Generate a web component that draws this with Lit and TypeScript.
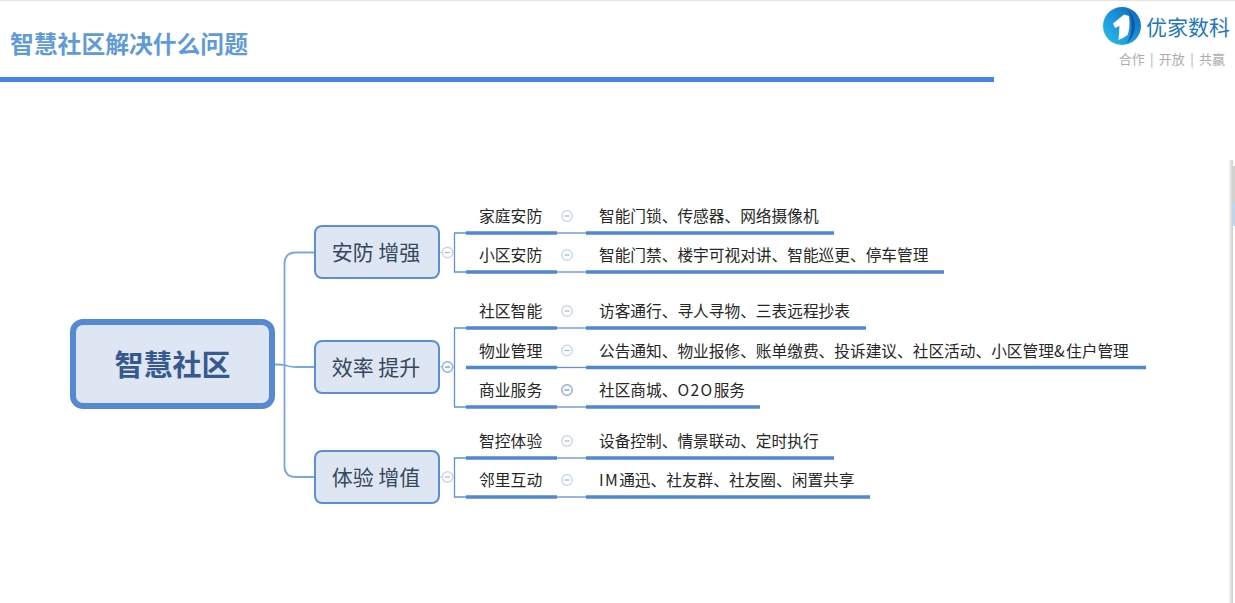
import { LitElement, html, css, svg } from "lit";
import { customElement } from "lit/decorators.js";

interface Leaf { label: string; detail: string; y: number; end: number; strong?: boolean }
interface Branch { label: string; y: number; top: number; leaves: Leaf[] }

const BRANCHES: Branch[] = [
  { label: "安防 增强", y: 252.5, top: 225, leaves: [
    { label: "家庭安防", detail: "智能门锁、传感器、网络摄像机", y: 233, end: 834 },
    { label: "小区安防", detail: "智能门禁、楼宇可视对讲、智能巡更、停车管理", y: 272, end: 944 },
  ]},
  { label: "效率 提升", y: 367, top: 340, leaves: [
    { label: "社区智能", detail: "访客通行、寻人寻物、三表远程抄表", y: 328, end: 866 },
    { label: "物业管理", detail: "公告通知、物业报修、账单缴费、投诉建议、社区活动、小区管理&住户管理", y: 367.5, end: 1146 },
    { label: "商业服务", detail: "社区商城、O2O服务", y: 407, end: 760, strong: true },
  ]},
  { label: "体验 增值", y: 477, top: 450, leaves: [
    { label: "智控体验", detail: "设备控制、情景联动、定时执行", y: 458, end: 834 },
    { label: "邻里互动", detail: "IM通迅、社友群、社友圈、闲置共享", y: 497, end: 870 },
  ]},
];

function toggle(cx: number, cy: number, strong = false) {
  const c = strong ? "#8fb0e0" : "#c9d7f2";
  const d = strong ? "#6f8fc4" : "#a9b4cc";
  return svg`<circle cx=${cx} cy=${cy} r="5.2" fill="#fff" stroke=${c} stroke-width="1.4"/>
    <line x1=${cx - 2.6} x2=${cx + 2.6} y1=${cy} y2=${cy} stroke=${d} stroke-width="1.2"/>`;
}

/** Latin runs sit wider in the reference than the CJK face's own Latin glyphs. */
function detailText(text: string) {
  return text.split(/([A-Za-z0-9&]+)/).map((part, i) =>
    i % 2 ? html`<span class="latin">${part}</span>` : part
  );
}

@customElement("app-root")
export class AppRoot extends LitElement {
  static styles = css`
    :host {
      display: block;
      width: 1235px;
      height: 603px;
      position: relative;
      overflow: hidden;
      background: #fff;
      font-family: "Noto Sans CJK SC", "Liberation Sans", sans-serif;
    }
    .header {
      height: 76px;
      border-top: 1px solid #e4e4e4;
      display: flex;
      justify-content: space-between;
      align-items: flex-start;
    }
    .title {
      margin: 25px 0 0 10px;
      font-size: 23.8px;
      line-height: 34px;
      font-weight: 700;
      color: #5f9bd8;
    }
    .brand {
      display: flex;
      flex-direction: column;
      align-items: flex-end;
      margin: 6px 5px 0 0;
    }
    .brand-top { display: flex; align-items: center; gap: 5px; }
    .brand-top svg { display: block; }
    .brand-name {
      font-size: 21px;
      line-height: 28px;
      color: #1f78bd;
    }
    .motto {
      font-size: 13px;
      line-height: 16px;
      margin: 6px 5px 0 0;
      color: #adadad;
      white-space: pre;
      word-spacing: 2.4px;
    }
    .bar { width: 994px; height: 5px; background: #4585e5; }
    .canvas { position: absolute; inset: 0; pointer-events: none; }
    .lines { position: absolute; inset: 0; }
    .root, .branch {
      position: absolute;
      box-sizing: border-box;
      display: flex;
      align-items: center;
      justify-content: center;
      background: #dde6f2;
    }
    .root {
      left: 70px;
      top: 319px;
      width: 205px;
      height: 90px;
      padding-bottom: 2px;
      border: 6px solid #558ad2;
      border-radius: 13px;
      font-size: 29px;
      font-weight: 700;
      color: #36598f;
    }
    .branch {
      left: 314px;
      width: 126px;
      height: 54px;
      padding: 0 2px 2px 0;
      border: 2.6px solid #5a8fd6;
      border-radius: 8px;
      font-size: 21px;
      color: #37475c;
      white-space: pre;
    }
    .text {
      position: absolute;
      font-size: 15.7px;
      line-height: 22px;
      color: #262626;
      white-space: nowrap;
    }
    .label { font-size: 15.8px; }
    .latin { letter-spacing: 1.4px; }
    .edge {
      position: absolute;
      right: 0;
      top: 160px;
      bottom: 0;
      width: 6px;
      background: linear-gradient(to right, #f4f4f4, #d2d2d2 60%, #fff 60%);
    }
    .tab {
      position: absolute;
      right: 0;
      width: 2px;
    }
    .tab-gray { top: 166px; height: 37px; background: #cfcfcc; }
    .tab-blue { top: 203px; height: 23px; background: #b8d6f6; }
  `;

  private connectors() {
    const spine = "#7aa7e4";
    const thin = "#5f92da";
    const thick = "#4f87d6";
    return svg`
      <path d="M274 364.5 H278 Q284 364.5 288 366 Q291 367 296 367 H314" fill="none" stroke=${spine} stroke-width="1.8"/>
      <path d="M314 252.5 H296 Q284.5 252.5 284.5 264 V466 Q284.5 477 296 477 H314" fill="none" stroke=${spine} stroke-width="1.8"/>
      ${BRANCHES.map((b) => {
        const first = b.leaves[0].y;
        const last = b.leaves[b.leaves.length - 1].y;
        return svg`
          <line x1="439" x2="454" y1=${b.y} y2=${b.y} stroke="#c3d3ef" stroke-width="1.2"/>
          <path d="M466 ${first} H454.5 V${last} H466" fill="none" stroke=${thin} stroke-width="1.3"/>
          ${toggle(447.5, b.y, b.label === "效率 提升")}
          ${b.leaves.map((l) => svg`
            <line x1="466" x2="557" y1=${l.y} y2=${l.y} stroke=${thick} stroke-width="3.6"/>
            <line x1="557" x2="586" y1=${l.y} y2=${l.y} stroke=${thin} stroke-width="1.3"/>
            <line x1="586" x2=${l.end} y1=${l.y} y2=${l.y} stroke=${thick} stroke-width="3.6"/>
            ${toggle(567, l.y - 17, l.strong)}
          `)}
        `;
      })}
    `;
  }

  render() {
    return html`
      <div class="header">
        <div class="title">智慧社区解决什么问题</div>
        <div class="brand">
          <div class="brand-top">
            <svg width="38" height="38" viewBox="0 0 38 38" aria-hidden="true">
              <defs>
                <linearGradient id="ring" x1="0" y1="1" x2="1" y2="0">
                  <stop offset="0" stop-color="#2cc0ec"/>
                  <stop offset="0.5" stop-color="#1a94da"/>
                  <stop offset="1" stop-color="#0f62b4"/>
                </linearGradient>
              </defs>
              <circle cx="19" cy="19" r="19" fill="url(#ring)"/>
              <path d="M25 3 C34 10 35 27 24 36 C30 26 30 12 25 3 Z" fill="#0d5aa8"/>
              <path d="M10 16.5 L21 7.5 L26 9 C27 16 26.5 24 24.5 28 Q20 31.5 15.5 33 L16.5 19 L12 21 Z" fill="#fff"/>
            </svg>
            <div class="brand-name">优家数科</div>
          </div>
          <div class="motto">合作 | 开放 | 共赢</div>
        </div>
      </div>
      <div class="bar"></div>

      <div class="canvas">
        <svg class="lines" width="1235" height="603" viewBox="0 0 1235 603">${this.connectors()}</svg>
        <div class="root">智慧社区</div>
        ${BRANCHES.map((b) => html`
          <div class="branch" style="top:${b.top}px">${b.label}</div>
          ${b.leaves.map((l) => html`
            <div class="text label" style="left:479px;top:${Math.round(l.y - 28)}px">${l.label}</div>
            <div class="text" style="left:599px;top:${Math.round(l.y - 28)}px">${detailText(l.detail)}</div>
          `)}
        `)}
      </div>

      <div class="edge"></div>
      <div class="tab tab-gray"></div>
      <div class="tab tab-blue"></div>
    `;
  }
}
